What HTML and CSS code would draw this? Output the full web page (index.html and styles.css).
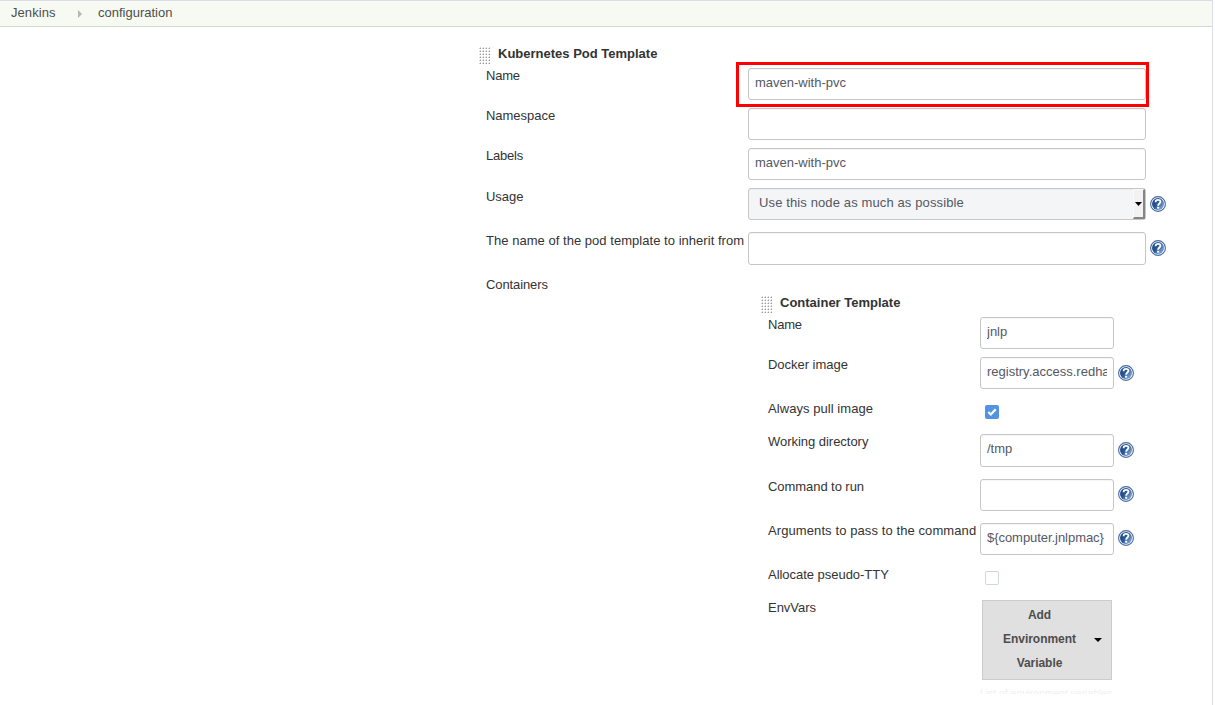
FILE: index.html
```
<!DOCTYPE html>
<html lang="en">
<head>
<meta charset="utf-8">
<title>configuration [Jenkins]</title>
<link rel="stylesheet" href="styles.css">
</head>
<body>
<svg class="defs" width="0" height="0" aria-hidden="true">
  <defs>
    <linearGradient id="blue" x1="0" y1="0.2" x2="1" y2="0.9">
      <stop offset="0.35" stop-color="#24508f"/>
      <stop offset="1" stop-color="#8fb4dd"/>
    </linearGradient>
    <symbol id="help" viewBox="0 0 16 16">
      <circle cx="8" cy="8" r="7.4" fill="#fff" stroke="#4468a2" stroke-width="1.1"/>
      <circle cx="8" cy="8" r="6" fill="url(#blue)"/>
      <path d="M5.7 6.2V5.8C5.7 3.3 10.4 3.2 10.4 5.8C10.4 7.5 8.1 7.5 8.1 9.7" fill="none" stroke="#fff" stroke-width="1.8"/>
      <rect x="7.1" y="10.8" width="2.1" height="1.9" fill="#fff"/>
    </symbol>
    <symbol id="grip" viewBox="0 0 12 18">
      <path d="M1 1.5H12M1 4.5H12M1 7.5H12M1 10.5H12M1 13.5H12M1 16.5H12" fill="none" stroke="#9a9a9a" stroke-dasharray="1 2"/>
      <path d="M0 1.5H12M0 4.5H12M0 7.5H12M0 10.5H12M0 13.5H12M0 16.5H12M1 .5H12M1 3.5H12M1 6.5H12M1 9.5H12M1 12.5H12M1 15.5H12" fill="none" stroke="#d4d4d4" stroke-dasharray="1 2"/>
    </symbol>
  </defs>
</svg>
<div class="page">
  <nav class="breadcrumbs">
    <span class="crumb-home">Jenkins</span>
    <svg class="crumb-arrow" width="4" height="8" viewBox="0 0 4 8"><path d="M0 0L4 4L0 8Z" fill="#b5b8b2"/></svg>
    <span class="crumb-config">configuration</span>
  </nav>
  <main class="pod">
    <h2 class="heading"><svg class="grip" width="12" height="18"><use href="#grip"/></svg><span class="pod-title">Kubernetes Pod Template</span></h2>
    <div class="row">
      <span class="label name">Name</span>
      <div class="field highlight"><span class="value">maven-with-pvc</span></div>
    </div>
    <div class="row"><span class="label">Namespace</span><div class="field"></div></div>
    <div class="row"><span class="label name">Labels</span><div class="field"><span class="value">maven-with-pvc</span></div></div>
    <div class="row helped low">
      <span class="label">Usage</span>
      <div class="field select"><span class="value usage">Use this node as much as possible</span><span class="drop"><svg width="7" height="4" viewBox="0 0 7 4"><path d="M0 0H7L3.5 4Z"/></svg></span></div>
      <svg class="help" width="16" height="16"><use href="#help"/></svg>
    </div>
    <div class="row helped low">
      <span class="label inherit">The name of the pod template to inherit from</span>
      <div class="field tall"></div>
      <svg class="help" width="16" height="16"><use href="#help"/></svg>
    </div>
    <div class="containers">
      <span class="label low-label">Containers</span>
      <section class="container">
        <h3 class="heading inner-heading"><svg class="grip" width="12" height="18"><use href="#grip"/></svg><span class="container-title">Container Template</span></h3>
        <div class="row"><span class="label name">Name</span><div class="field"><span class="value">jnlp</span></div></div>
        <div class="row helped">
          <span class="label">Docker image</span>
          <div class="field"><span class="value image">registry.access.redhat.com</span></div>
          <svg class="help" width="16" height="16"><use href="#help"/></svg>
        </div>
        <div class="row check-row">
          <span class="label pull">Always pull image</span>
          <span class="check checked"><svg width="14" height="14" viewBox="0 0 14 14"><path d="M3.3 7L5.8 9.5L10.7 4.3" fill="none" stroke="#fff" stroke-width="2.2"/></svg></span>
        </div>
        <div class="row helped directory">
          <span class="label">Working directory</span>
          <div class="field tall"><span class="value">/tmp</span></div>
          <svg class="help" width="16" height="16"><use href="#help"/></svg>
        </div>
        <div class="row helped">
          <span class="label command">Command to run</span>
          <div class="field"></div>
          <svg class="help raised" width="16" height="16"><use href="#help"/></svg>
        </div>
        <div class="row helped">
          <span class="label arguments">Arguments to pass to the command</span>
          <div class="field"><span class="value mac">${computer.jnlpmac}</span></div>
          <svg class="help raised" width="16" height="16"><use href="#help"/></svg>
        </div>
        <div class="row check-row"><span class="label">Allocate pseudo-TTY</span><span class="check"></span></div>
        <div class="row env">
          <span class="label">EnvVars</span>
          <div class="env-content">
            <button class="add"><span>Add<br>Environment<br>Variable</span><svg width="8" height="4" viewBox="0 0 8 4"><path d="M0 0H8L4 4Z"/></svg></button>
            <div class="hint">List of environment variables</div>
          </div>
        </div>
      </section>
    </div>
  </main>
</div>
</body>
</html>
```

FILE: styles.css
```
* { box-sizing: border-box; }
body {
  margin: 0;
  background: #fff;
  color: #333;
  font: 13px/16px "Liberation Sans", Arial, sans-serif;
}
.defs { position: absolute; }
.page { width: 1213px; height: 705px; overflow: hidden; border-right: 1px solid #dcdce6; }
.breadcrumbs {
  display: flex;
  height: 27px;
  padding: 4px 0 0 11px;
  border-top: 1px solid #dcdce8;
  border-bottom: 1px solid #d3d7cf;
  background: #f6faf2;
  color: #4d4f4b;
}
.crumb-home { width: 67px; letter-spacing: .07px; }
.crumb-arrow { margin-top: 5px; }
.crumb-config { margin-left: 16px; }
.pod { padding: 18px 0 0 478px; }
.heading {
  display: flex;
  height: 23px;
  margin: 0;
  color: #333;
  font-size: 13px;
  line-height: 17px;
}
.grip { margin: 2px 7px 0 1px; }
.row {
  display: grid;
  grid-template-columns: 258px 398px 16px;
  column-gap: 4px;
  height: 40px;
  padding-left: 8px;
}
.helped { height: 44px; }
.label { white-space: nowrap; letter-spacing: -.03px; }
.name { letter-spacing: -.2px; }
.inherit { letter-spacing: .035px; }
.pull { letter-spacing: .06px; }
.command { letter-spacing: -.06px; }
.arguments { letter-spacing: .095px; }
.low .label { padding-top: 1px; }
.field {
  height: 32px;
  padding: 6px;
  border: 1px solid #c6c6c6;
  border-radius: 3px;
  box-shadow: inset 0 1px 1px #0000000b;
  color: #555765;
}
.tall { height: 33px; }
.value { display: block; overflow: hidden; white-space: nowrap; }
.mac { letter-spacing: -.05px; }
.highlight { position: relative; }
.highlight::after {
  position: absolute;
  top: -7px;
  right: -4px;
  bottom: -8px;
  left: -13px;
  border: 3px solid #f00;
  content: "";
}
.select { display: flex; justify-content: space-between; padding: 0; background: #f4f5f7; }
.usage { padding: 6px 0 0 10px; letter-spacing: .12px; }
.drop {
  display: flex;
  align-items: center;
  justify-content: center;
  width: 12px;
  height: 30px;
  border: solid;
  border-width: 1px 2px 2px 1px;
  border-color: #fafafa #858585 #858585 #fafafa;
  background: #f2f2f3;
}
.help { margin-top: 8px; }
.raised { margin-top: 7px; }
.containers { display: grid; grid-template-columns: 274px 420px; padding-left: 8px; }
.low-label { padding-top: 1px; letter-spacing: -.1px; }
.container { padding-top: 18px; }
.inner-heading { height: 23px; }
.container .row { grid-template-columns: 208px 134px 16px; }
.container .check-row { height: 33px; }
.check {
  width: 14px;
  height: 14px;
  margin: 4px 0 0 5px;
  border: 1px solid #cdd5e5;
  border-radius: 2px;
}
.checked { border: 0; background: #5294e2; }
.checked svg { display: block; }
.container .directory { height: 45px; }
.env-content { padding-left: 2px; }
.add {
  display: flex;
  align-items: center;
  width: 130px;
  height: 80px;
  padding: 0 8px 2px 20px;
  border: 1px solid #ccc;
  background: #e0e0e0;
  color: #4d4d4d;
  font: bold 12px/24px "Liberation Sans", Arial, sans-serif;
}
.add span { width: 73px; letter-spacing: -.05px; }
.add svg { margin: 2px 0 0 18px; }
.hint {
  height: 7px;
  margin: 7px 0 0 -2px;
  overflow: hidden;
  color: #f0f0f0;
  font-size: 10.4px;
  line-height: 14px;
  white-space: nowrap;
}
```
